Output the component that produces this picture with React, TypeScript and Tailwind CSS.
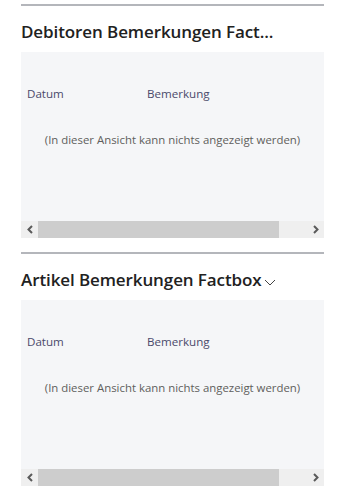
import React from 'react';

const ArrowLeft = () => (
  <svg width="8" height="9" viewBox="0 0 8 9" fill="none">
    <path d="M6 1 L2.5 4.5 L6 8" stroke="#5a5a5a" strokeWidth="2" />
  </svg>
);

const ArrowRight = () => (
  <svg width="8" height="9" viewBox="0 0 8 9" fill="none">
    <path d="M2 1 L5.5 4.5 L2 8" stroke="#5a5a5a" strokeWidth="2" />
  </svg>
);

const Chevron = () => (
  <svg width="12" height="7" viewBox="0 0 12 7" fill="none" className="ml-[2px] mt-[11px]">
    <path d="M1 1 L6 6 L11 1" stroke="#444" strokeWidth="1" />
  </svg>
);

interface FactboxProps {
  title: string;
  showChevron?: boolean;
}

const Factbox: React.FC<FactboxProps> = ({ title, showChevron }) => {
  return (
    <div className="border-t-2 border-[#b4b6bb]">
      {/* Title */}
      <div className="h-[46px] pt-[14px] flex items-start">
        <span className="text-[17px] leading-[24px] font-semibold text-[#212121] whitespace-nowrap tracking-[-0.1px]">
          {title}
        </span>
        {showChevron && <Chevron />}
      </div>

      {/* Panel */}
      <div className="h-[186px] bg-[#f5f6f8] flex flex-col">
        <div className="pt-[34px] flex text-[11.6px] leading-[16px] text-[#4b4a6b]">
          <span className="pl-[6px] w-[126px]">Datum</span>
          <span>Bemerkung</span>
        </div>
        <div className="mt-[30px] text-center text-[11.4px] leading-[16px] text-[#605e5c]">
          (In dieser Ansicht kann nichts angezeigt werden)
        </div>

        {/* Scrollbar */}
        <div className="mt-auto h-[17px] flex bg-[#efefef]">
          <div className="w-[17px] flex items-center justify-center">
            <ArrowLeft />
          </div>
          <div className="w-[241px] bg-[#cdcdcd]" />
          <div className="flex-1" />
          <div className="w-[17px] flex items-center justify-center">
            <ArrowRight />
          </div>
        </div>
      </div>
    </div>
  );
};

export default function App() {
  return (
    <div
      className="w-[340px] h-[493px] bg-white pt-[4px] overflow-hidden"
      style={{ fontFamily: '"Open Sans", "Noto Sans", sans-serif' }}
    >
      <div className="ml-[21px] w-[303px] flex flex-col gap-[14px]">
        <Factbox title="Debitoren Bemerkungen Fact..." />
        <Factbox title="Artikel Bemerkungen Factbox" showChevron />
      </div>
    </div>
  );
}
